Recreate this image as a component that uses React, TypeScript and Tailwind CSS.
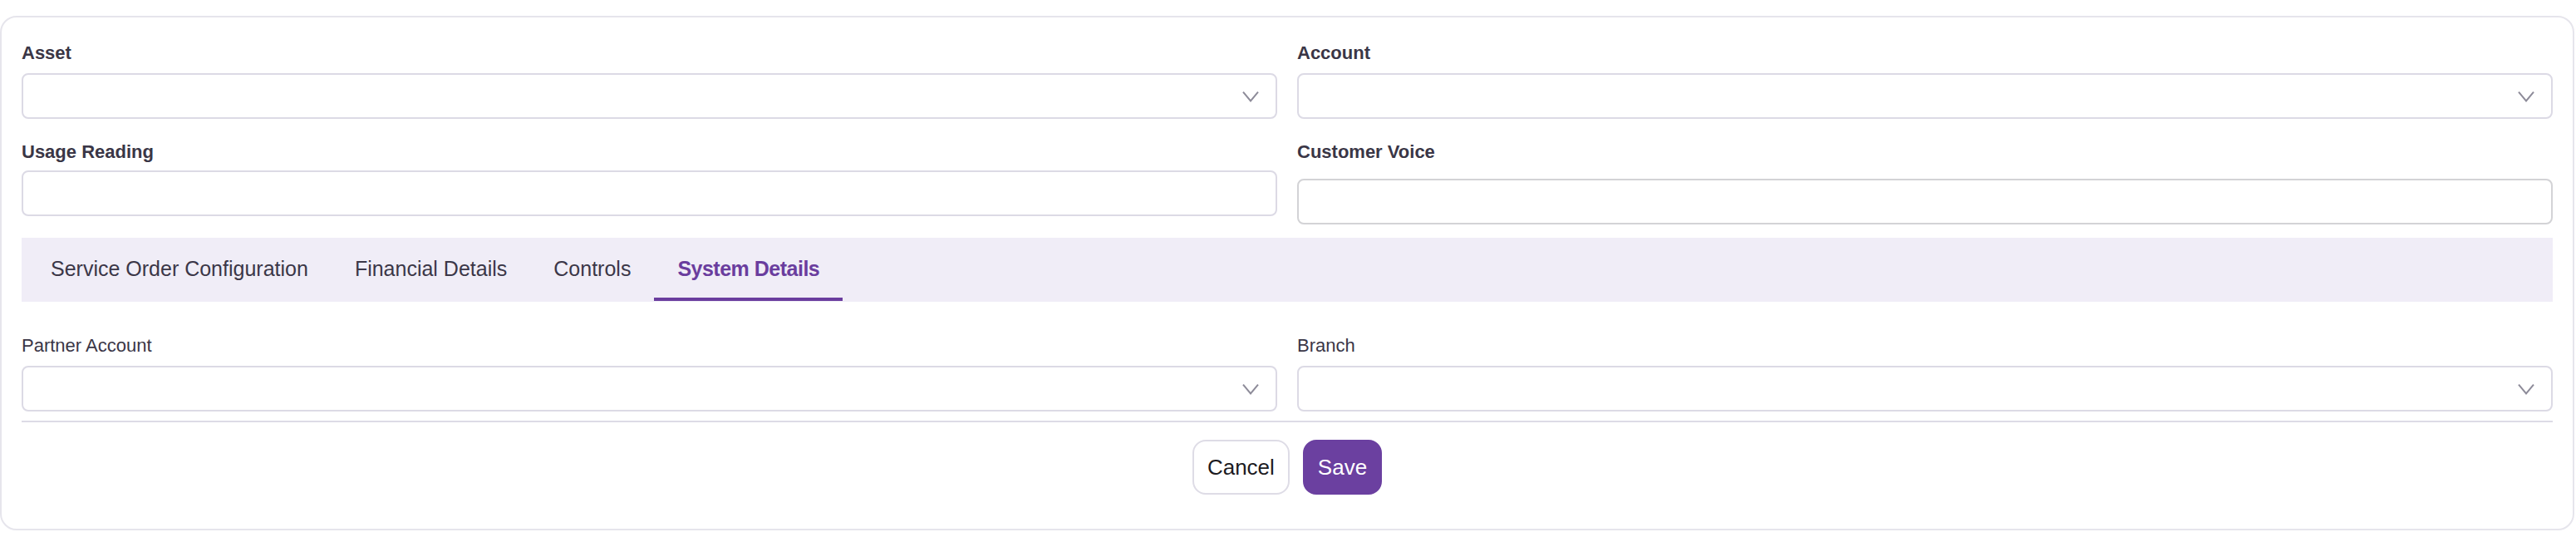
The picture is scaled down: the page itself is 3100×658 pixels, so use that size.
import { type ReactNode } from 'react';

const tabs = ['Service Order Configuration', 'Financial Details', 'Controls', 'System Details'];

function Chevron() {
  return (
    <svg width="10" height="7" viewBox="0 0 10 7" fill="none" className="shrink-0">
      <path d="M0.5 0.8 L5 6.2 L9.5 0.8" stroke="#8d8b99" strokeWidth="1" />
    </svg>
  );
}

function Select() {
  return (
    <div className="flex h-[27.5px] w-full items-center justify-end rounded-[4px] border border-[#dcdae5] bg-white pr-[10px]">
      <Chevron />
    </div>
  );
}

function Field({
  label,
  bold = true,
  gap = 'mb-1',
  children,
}: {
  label: string;
  bold?: boolean;
  gap?: string;
  children: ReactNode;
}) {
  return (
    <div className="flex flex-col">
      <label
        className={`${gap} block text-[11px] leading-4 text-[#3a3646] ${bold ? 'font-bold' : 'font-normal'}`}
      >
        {label}
      </label>
      {children}
    </div>
  );
}

export default function App() {
  const active = 'System Details';

  return (
    <div className="min-h-[329px] bg-white pt-[9.5px] font-['Liberation_Sans',Arial,sans-serif] [zoom:2]">
      <div className="mr-px rounded-[10px] border border-[#e6e5ec] bg-white px-3 pt-[13.5px] pb-3">
        <div className="grid grid-cols-2 gap-x-3 gap-y-3">
          <Field label="Asset">
            <Select />
          </Field>
          <Field label="Account">
            <Select />
          </Field>
          <Field label="Usage Reading" gap="mb-[3px]">
            <input
              type="text"
              className="h-[27.5px] w-full rounded-[4px] border border-[#dcdae5] bg-white px-2 text-[12px] outline-none"
            />
          </Field>
          <Field label="Customer Voice" gap="mb-[8px]">
            <input
              type="text"
              className="h-[27.5px] w-full rounded-[4px] border border-[#d3d3d6] bg-white px-2 text-[12px] outline-none"
            />
          </Field>
        </div>

        <div className="mt-2 flex h-[38.5px] items-stretch bg-[#f0edf7] pl-[3.5px]">
          {tabs.map((tab) => {
            const isActive = tab === active;
            return (
              <button
                key={tab}
                type="button"
                className={`relative flex items-center px-[14px] pb-px text-[12.5px] ${
                  isActive ? 'font-bold tracking-[-0.25px] text-[#6a3d9e]' : 'text-[#3b3748]'
                }`}
              >
                {tab}
                {isActive && (
                  <span className="absolute right-0 bottom-[0.5px] left-0 h-[2px] bg-[#6a3d9e]" />
                )}
              </button>
            );
          })}
        </div>

        <div className="grid grid-cols-2 gap-x-3 pt-[18.5px]">
          <Field label="Partner Account" bold={false}>
            <Select />
          </Field>
          <Field label="Branch" bold={false}>
            <Select />
          </Field>
        </div>

        <div className="mt-[5.5px] h-px bg-[#dddbe6]" />

        <div className="flex justify-center gap-2 pt-[10.5px] pb-[8.5px]">
          <button
            type="button"
            className="h-[33px] rounded-lg border border-[#dedce6] bg-white px-2 text-[13px] text-[#1c1b1f]"
          >
            Cancel
          </button>
          <button
            type="button"
            className="h-[33px] rounded-lg border border-[#6b40a0] bg-[#6b40a0] px-2 text-[13px] text-white"
          >
            Save
          </button>
        </div>
      </div>
    </div>
  );
}
